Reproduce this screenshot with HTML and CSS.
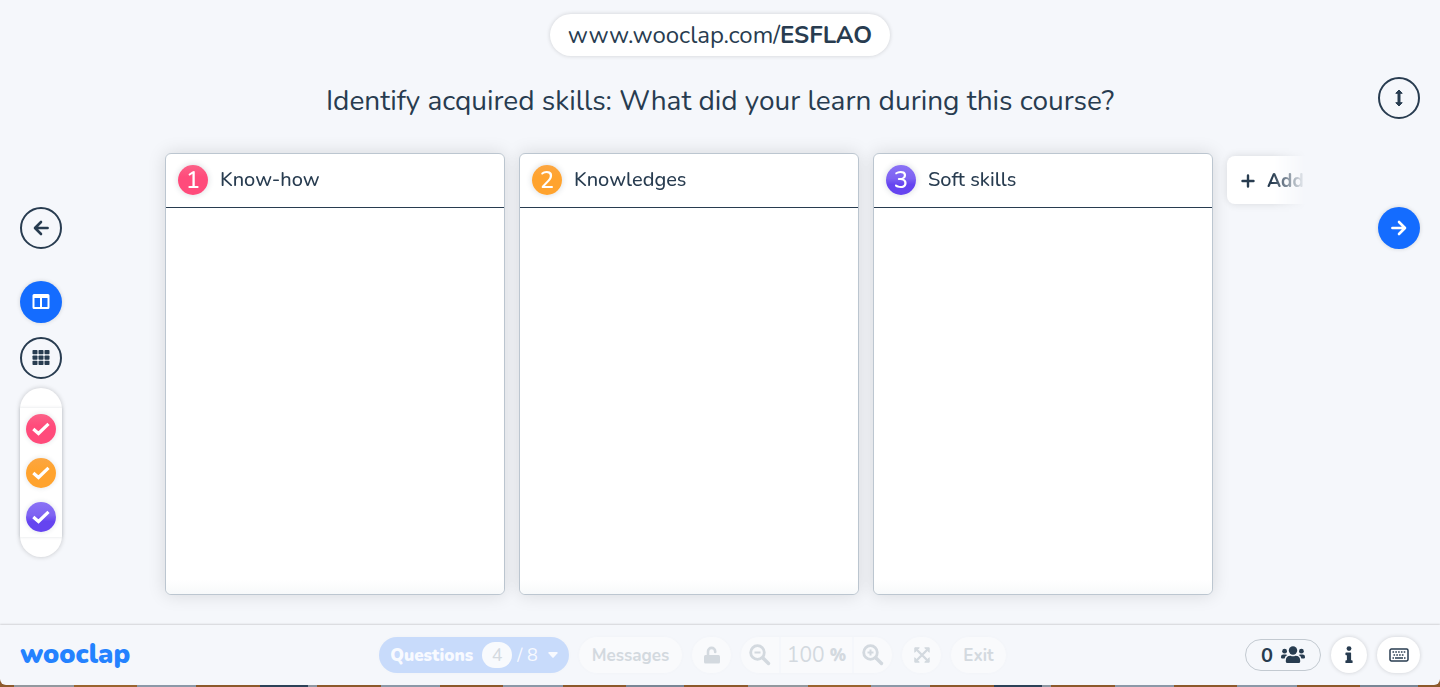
FILE: index.html
```html
<!DOCTYPE html>
<html lang="en">
<head>
<meta charset="utf-8">
<title>Wooclap</title>
<meta name="viewport" content="width=device-width, initial-scale=1">
<link rel="stylesheet" href="styles.css">
</head>
<body>
<div class="window">
  <main class="stage">
    <nav class="rail rail-left" aria-label="Views">
      <button class="round outline" type="button" aria-label="Previous question">
        <svg width="16" height="16" viewBox="0 0 16 16" fill="none" stroke="currentColor" stroke-width="2.6" stroke-linecap="round" stroke-linejoin="round"><path d="M8 2 2 8l6 6M2.4 8H14.6"/></svg>
      </button>
      <div class="view-tools">
        <button class="round filled" type="button" aria-label="Column view">
          <svg width="18" height="16" viewBox="0 0 18 16" fill="currentColor" fill-rule="evenodd"><path d="M2 0h14a1.500 1.500 0 0 1 1.500 1.500v12A1.500 1.500 0 0 1 16 15H2a1.500 1.500 0 0 1-1.500-1.500v-12A1.500 1.500 0 0 1 2 0zM2.500 4v9H8V4zM10 4v9h5.500V4z"/></svg>
        </button>
        <button class="round outline" type="button" aria-label="Grid view">
          <svg width="18" height="16" viewBox="0 0 18 16" fill="currentColor"><rect x="0.500" y="0" width="5" height="4.300" rx=".8"/><rect x="6.500" y="0" width="5" height="4.300" rx=".8"/><rect x="12.500" y="0" width="5" height="4.300" rx=".8"/><rect x="0.500" y="5.400" width="5" height="4.300" rx=".8"/><rect x="6.500" y="5.400" width="5" height="4.300" rx=".8"/><rect x="12.500" y="5.400" width="5" height="4.300" rx=".8"/><rect x="0.500" y="10.800" width="5" height="4.300" rx=".8"/><rect x="6.500" y="10.800" width="5" height="4.300" rx=".8"/><rect x="12.500" y="10.800" width="5" height="4.300" rx=".8"/></svg>
        </button>
      </div>
      <div class="filters">
        <div class="filter-list">
          <label class="filter"><input class="filter-box pink" type="checkbox" checked aria-label="Know-how"><svg class="filter-tick" width="18" height="14" viewBox="0 0 18 14" fill="none" stroke="currentColor" stroke-width="3.200"><path d="M1.300 7 6.500 11.500 16.500 1.800"/></svg></label>
          <label class="filter"><input class="filter-box orange" type="checkbox" checked aria-label="Knowledges"><svg class="filter-tick" width="18" height="14" viewBox="0 0 18 14" fill="none" stroke="currentColor" stroke-width="3.200"><path d="M1.300 7 6.500 11.500 16.500 1.800"/></svg></label>
          <label class="filter"><input class="filter-box purple" type="checkbox" checked aria-label="Soft skills"><svg class="filter-tick" width="18" height="14" viewBox="0 0 18 14" fill="none" stroke="currentColor" stroke-width="3.200"><path d="M1.300 7 6.500 11.500 16.500 1.800"/></svg></label>
        </div>
      </div>
    </nav>

    <section class="content">
      <a class="join-link" href="#">www.wooclap.com/<b>ESFLAO</b></a>
      <h1 class="question">Identify acquired skills: What did your learn during this course?</h1>
      <div class="board">
        <article class="column">
          <header class="column-head"><span class="badge pink">1</span><h2 class="column-title">Know-how</h2></header>
          <div class="column-body"></div>
        </article>
        <article class="column">
          <header class="column-head"><span class="badge orange">2</span><h2 class="column-title">Knowledges</h2></header>
          <div class="column-body"></div>
        </article>
        <article class="column">
          <header class="column-head"><span class="badge purple">3</span><h2 class="column-title">Soft skills</h2></header>
          <div class="column-body"></div>
        </article>
        <button class="add-column" type="button">
          <svg width="14" height="14" viewBox="0 0 14 14" fill="none" stroke="currentColor" stroke-width="2.400" stroke-linecap="round"><path d="M7 1.500v11M1.500 7h11"/></svg>
          Add
        </button>
      </div>
    </section>

    <nav class="rail rail-right" aria-label="Navigation">
      <button class="round outline" type="button" aria-label="Collapse header">
        <svg width="10" height="18" viewBox="0 0 10 18" fill="currentColor" stroke="currentColor" stroke-linejoin="round"><path d="M5 1 8.200 4.300H6v9.400h2.200L5 17l-3.200-3.300H4V4.300H1.800z"/></svg>
      </button>
      <button class="round filled" type="button" aria-label="Next question">
        <svg width="16" height="16" viewBox="0 0 16 16" fill="none" stroke="currentColor" stroke-width="2.600" stroke-linecap="round" stroke-linejoin="round"><path d="m8 2 6 6-6 6M13.600 8H1.400"/></svg>
      </button>
    </nav>
  </main>

  <footer class="toolbar">
    <a class="logo" href="#">wooclap</a>
    <div class="controls">
      <button class="pill questions" type="button">
        <b>Questions</b><span class="current">4</span><span class="total">/ 8</span>
        <svg width="10" height="6" viewBox="0 0 10 6" fill="currentColor"><path d="M1 0h8q1 .3.500 1.200L5.700 5.500q-.7.700-1.400 0L.5 1.200Q0 .3 1 0z"/></svg>
      </button>
      <button class="pill messages" type="button">Messages</button>
      <button class="pill square" type="button" aria-label="Unlock">
        <svg width="16" height="18" viewBox="0 0 16 18"><rect x="0" y="9" width="16" height="8.500" rx="1.500" fill="currentColor"/><path d="M4 9V5.500a3.600 3.600 0 0 1 7.200 0V6" fill="none" stroke="currentColor" stroke-width="2.600" stroke-linecap="round"/></svg>
      </button>
      <div class="pill zoom">
        <button class="zoom-button" type="button" aria-label="Zoom out">
          <svg width="22" height="22" viewBox="0 0 22 22" fill="none" stroke="currentColor"><circle cx="8.500" cy="8.500" r="6.800" stroke-width="2.800"/><path d="m14 14 5.500 5.500" stroke-width="3.400" stroke-linecap="round"/><path d="M5.500 8.500h6" stroke-width="2"/></svg>
        </button>
        <label class="zoom-level"><input class="zoom-value" type="text" value="100" aria-label="Zoom level"><b>%</b></label>
        <button class="zoom-button" type="button" aria-label="Zoom in">
          <svg width="22" height="22" viewBox="0 0 22 22" fill="none" stroke="currentColor"><circle cx="8.500" cy="8.500" r="6.800" stroke-width="2.800"/><path d="m14 14 5.500 5.500" stroke-width="3.400" stroke-linecap="round"/><path d="M5.500 8.500h6M8.500 5.500v6" stroke-width="2"/></svg>
        </button>
      </div>
      <button class="pill square" type="button" aria-label="Full screen">
        <svg width="16" height="16" viewBox="0 0 16 16" fill="currentColor" stroke="currentColor"><path d="M3 3l10 10M13 3 3 13" stroke-width="2.400"/><path d="M.8.8h4.500L.8 5.300zM15.200.8v4.500L10.700.8zM.8 15.200v-4.500l4.500 4.500zM15.200 15.200h-4.500l4.500-4.500z" stroke-linejoin="round"/></svg>
      </button>
      <button class="pill exit" type="button">Exit</button>
    </div>
    <div class="status">
      <span class="participants">0
        <svg width="24" height="18" viewBox="0 0 24 18" fill="currentColor"><circle cx="12" cy="4.500" r="4.200"/><circle cx="3.600" cy="5.200" r="2.400"/><circle cx="20.400" cy="5.200" r="2.400"/><path d="M4.800 14.500q0-4.800 4.700-4.800 2.500 1 5 0 4.700 0 4.700 4.800v.9q0 1.600-1.600 1.600H6.400q-1.600 0-1.600-1.600zM0 10.800q0-2.300 2.300-2.300h2.400q1 0 1.600.6-2.200 1-2.700 3.400H1.200Q0 12.500 0 11.400zM24 10.800q0-2.300-2.300-2.300h-2.400q-1 0-1.600.6 2.200 1 2.700 3.400h2.400q1.200 0 1.200-1.100z"/></svg>
      </span>
      <button class="tool tool-info" type="button" aria-label="Information">
        <svg width="8" height="18" viewBox="0 0 8 18" fill="currentColor"><circle cx="4" cy="2.600" r="2.400"/><path d="M1.200 6.500h4.300q.6 0 .6.600v7.200h.8q.7 0 .7.700v1.400q0 .7-.7.700H1.100q-.7 0-.7-.7V15q0-.7.7-.7h.8V9.200h-.8q-.7 0-.7-.7V7.200q0-.7.8-.7z"/></svg>
      </button>
      <button class="tool tool-keys" type="button" aria-label="Keyboard shortcuts">
        <svg width="20" height="14" viewBox="0 0 20 14" fill="none" stroke="currentColor" stroke-width="1.500"><rect x="1" y="1" width="18" height="12" rx="1.400"/><path d="M3.500 4h13M4.500 7h11" stroke-dasharray="1.600 1.200"/><path d="M3.500 10H5M6 10h8M15 10h1.500"/></svg>
      </button>
    </div>
  </footer>
</div>
</body>
</html>
```

FILE: styles.css
```css
* {
  box-sizing: border-box;
}

body {
  margin: 0;
  color: #283c50;
  background: repeating-linear-gradient(90deg, #8d5a2c 0 14px, #93999f 14px 74px, #9a6530 74px 137px, #8c99a8 137px 196px, #8d5a2c 196px 260px, #2d4258 260px 308px, #8f98a3 308px 317px, #8d5a2c 317px 381px, #8c99a8 381px 440px, #8d5a2c 440px 503px, #8c99a8 503px 563px, #8d5a2c 563px 626px, #7a8796 626px 684px, #8d5a2c 684px 734px);
  font-family: Nunito, "Open Sans", "Noto Sans", sans-serif;
}

button,
input {
  margin: 0;
  padding: 0;
  border: 0;
  color: inherit;
  background: none;
  font: inherit;
}

button {
  display: flex;
  align-items: center;
  justify-content: center;
  cursor: pointer;
}

svg {
  display: block;
  flex: none;
}

a {
  color: inherit;
  text-decoration: none;
}

.window {
  display: flex;
  flex-direction: column;
  min-height: calc(100vh - 2px);
  margin-bottom: 2px;
  border-radius: 0 0 6px 6px;
  background: #f5f7fb;
}

.stage {
  flex: 1;
  display: grid;
  grid-template-columns: 42px minmax(0, 1fr) 42px;
  padding: 14px 20px;
}

/* Side rails */

.rail {
  display: flex;
  flex-direction: column;
}

.rail-left {
  padding-top: 193px;
}

.rail-right {
  gap: 88px;
  padding-top: 63px;
}

.round {
  width: 42px;
  height: 42px;
  border-radius: 50%;
}

.outline {
  border: 2px solid #283c50;
}

.filled {
  color: #fff;
  background: #146cff;
  box-shadow: 0 0 4px rgba(0, 0, 0, .15);
}

.view-tools {
  display: flex;
  flex-direction: column;
  gap: 14px;
  margin: 32px 0 9px;
}

.filters {
  padding: 20px 0;
  border-radius: 21px;
  background: #fff;
  box-shadow: 0 0 5px rgba(0, 0, 0, .2);
}

.filter-list {
  display: flex;
  flex-direction: column;
  align-items: center;
  gap: 14px;
  padding: 6px 0 5px;
  box-shadow: 0 0 3px rgba(40, 60, 80, .15);
}

.filter {
  display: grid;
  place-items: center;
}

.filter-box,
.filter-tick {
  grid-area: 1 / 1;
}

.filter-box {
  width: 30px;
  height: 30px;
  border-radius: 50%;
  appearance: none;
  box-shadow: 0 0 5px rgba(40, 60, 80, .15);
}

.filter-tick {
  z-index: 1;
  color: #fff;
}

.pink {
  background: linear-gradient(#fb6288, #ff4b7b 40%);
}

.orange {
  background: linear-gradient(#fba642, #ffa32e 40%);
}

.purple {
  background: linear-gradient(#8a72f5, #7d62f2 45%, #6544f0 65%);
}

/* Question and board */

.content {
  display: flex;
  flex-direction: column;
  align-items: center;
}

.join-link {
  padding: 0 18px;
  border-radius: 21px;
  background: #fff;
  box-shadow: 0 0 4px rgba(0, 0, 0, .16);
  font-size: 24px;
  line-height: 42px;
}

.question {
  margin: 24px 0 0;
  font-size: 28px;
  font-weight: 400;
  line-height: 42px;
  text-align: center;
}

.board {
  flex: 1;
  align-self: stretch;
  display: flex;
  align-items: flex-start;
  gap: 14px;
  margin: 15px 72px 0 87px;
  padding: 16px 0 16px 16px;
  overflow: hidden;
  mask-image: linear-gradient(90deg, #000 calc(100% - 34px), transparent);
}

.column {
  flex: 0 0 340px;
  align-self: stretch;
  display: flex;
  flex-direction: column;
  border: 1px solid #bcc6d0;
  border-radius: 6px;
  background: #fff;
  box-shadow: 0 0 18px rgba(0, 0, 0, .13);
}

.column-head {
  display: flex;
  align-items: center;
  gap: 12px;
  height: 54px;
  padding: 0 12px 2px;
  border-bottom: 1px solid #283c50;
}

.badge {
  width: 30px;
  border-radius: 50%;
  box-shadow: 0 0 6px rgba(40, 60, 80, .2);
  color: #fff;
  font-size: 24px;
  font-weight: 500;
  line-height: 30px;
  text-align: center;
}

.column-title {
  margin: 0;
  font-size: 20px;
  font-weight: 500;
  line-height: 30px;
}

.column-body {
  flex: 1;
  border-radius: 0 0 6px 6px;
  background: linear-gradient(0deg, #f7f9fa, #fff 14px);
}

.add-column {
  flex: none;
  gap: 12px;
  height: 48px;
  margin-top: 3px;
  padding: 2px 14px 0;
  border-radius: 8px;
  background: #fff;
  box-shadow: 0 0 8px rgba(0, 0, 0, .12);
  font-size: 19px;
  font-weight: 700;
}

/* Bottom toolbar */

.toolbar {
  display: flex;
  align-items: center;
  justify-content: space-between;
  height: 60px;
  padding: 0 20px;
  border-radius: 0 0 6px 6px;
  box-shadow: 0 -1px 2px rgba(0, 0, 0, .14);
}

.logo {
  width: 120px;
  color: #2482ff;
  font-size: 27px;
  font-weight: 900;
  line-height: 36px;
}

.controls,
.status {
  display: flex;
  align-items: center;
  gap: 10px;
}

.pill {
  height: 36px;
  border-radius: 18px;
  color: #d3d9df;
  background: #f9fafc;
  box-shadow: 0 0 4px rgba(0, 0, 0, .02);
  font-size: 17px;
  font-weight: 700;
}

.questions {
  width: 190px;
  color: #f8faff;
  background: #c8dbfb;
}

.current {
  width: 30px;
  margin: 0 5px 0 9px;
  border-radius: 13px;
  color: #d3d9df;
  background: #f8fafd;
  font-size: 18px;
  font-weight: 400;
  line-height: 26px;
}

.total {
  margin-right: 10px;
  font-size: 18px;
  font-weight: 400;
}

.messages {
  width: 103px;
}

.square {
  width: 39px;
}

.zoom {
  display: flex;
  width: 151px;
}

.zoom-button {
  width: 38px;
}

.zoom-level {
  flex: 1;
  display: flex;
  align-items: center;
  justify-content: center;
  gap: 5px;
  border: solid #f5f7fb;
  border-width: 0 2px;
}

.zoom-value {
  width: 38px;
  font-size: 21px;
  font-weight: 400;
}

.exit {
  width: 55px;
}

.participants {
  display: flex;
  align-items: center;
  justify-content: center;
  gap: 8px;
  width: 76px;
  height: 32px;
  border: 1px solid #c3cad1;
  border-radius: 16px;
  font-size: 20px;
  font-weight: 700;
}

.tool {
  height: 36px;
  border-radius: 18px;
  background: #fff;
  box-shadow: 0 0 4px rgba(0, 0, 0, .16);
}

.tool-info {
  width: 36px;
}

.tool-keys {
  width: 43px;
}
```
